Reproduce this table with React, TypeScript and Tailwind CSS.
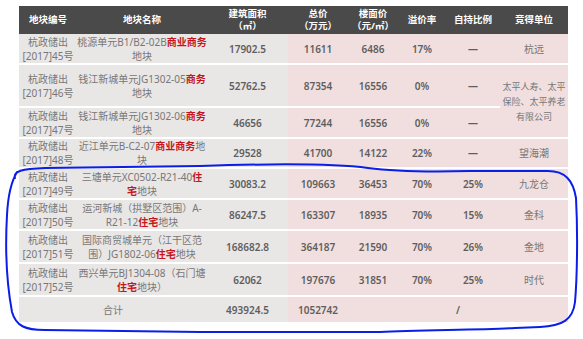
import type { ReactNode } from "react";

type Row = {
  code: string;
  name: ReactNode;
  area: string;
  total: string;
  unit: string;
  premium: string;
  hold: string;
  winner?: ReactNode;
  winnerSpan?: number;
  h: string;
};

function Red({ children }: { children: ReactNode }) {
  return <span className="font-bold text-[#c4161c]">{children}</span>;
}

const rows: Row[] = [
  {
    code: "45",
    name: (
      <>
        桃源单元B1/B2-02B<Red>商业商务</Red>
        <br />
        地块
      </>
    ),
    area: "17902.5",
    total: "11611",
    unit: "6486",
    premium: "17%",
    hold: "—",
    winner: "杭远",
    h: "h-[30px]",
  },
  {
    code: "46",
    name: (
      <>
        钱江新城单元JG1302-05<Red>商务</Red>
        <br />
        地块
      </>
    ),
    area: "52762.5",
    total: "87354",
    unit: "16556",
    premium: "0%",
    hold: "—",
    winner: (
      <span className="text-[9px] leading-[15px] whitespace-nowrap">
        太平人寿、太平
        <br />
        保险、太平养老
        <br />
        有限公司
      </span>
    ),
    winnerSpan: 2,
    h: "h-[43px]",
  },
  {
    code: "47",
    name: (
      <>
        钱江新城单元JG1302-06<Red>商务</Red>
        <br />
        地块
      </>
    ),
    area: "46656",
    total: "77244",
    unit: "16556",
    premium: "0%",
    hold: "—",
    h: "h-[31px]",
  },
  {
    code: "48",
    name: (
      <>
        近江单元B-C2-07<Red>商业商务</Red>地
        <br />块
      </>
    ),
    area: "29528",
    total: "41700",
    unit: "14122",
    premium: "22%",
    hold: "—",
    winner: "望海潮",
    h: "h-[30px]",
  },
  {
    code: "49",
    name: (
      <>
        三塘单元XC0502-R21-40<Red>住</Red>
        <br />
        <Red>宅</Red>地块
      </>
    ),
    area: "30083.2",
    total: "109663",
    unit: "36453",
    premium: "70%",
    hold: "25%",
    winner: "九龙仓",
    h: "h-[31px]",
  },
  {
    code: "50",
    name: (
      <>
        运河新城（拱墅区范围）A-
        <br />
        R21-12<Red>住宅</Red>地块
      </>
    ),
    area: "86247.5",
    total: "163307",
    unit: "18935",
    premium: "70%",
    hold: "15%",
    winner: "金科",
    h: "h-[31px]",
  },
  {
    code: "51",
    name: (
      <>
        国际商贸城单元（江干区范
        <br />
        围）JG1802-06<Red>住宅</Red>地块
      </>
    ),
    area: "168682.8",
    total: "364187",
    unit: "21590",
    premium: "70%",
    hold: "26%",
    winner: "金地",
    h: "h-[33px]",
  },
  {
    code: "52",
    name: (
      <>
        西兴单元BJ1304-08（石门塘
        <br />
        <Red>住宅</Red>地块）
      </>
    ),
    area: "62062",
    total: "197676",
    unit: "31851",
    premium: "70%",
    hold: "25%",
    winner: "时代",
    h: "h-[33px]",
  },
];

const gray = "bg-[#e9e6e6] border-b-2 border-white p-0 text-center align-middle";
const pink = "bg-[#f1dfdf] border-b-2 border-white p-0 text-center align-middle";
const num = "font-semibold text-[#5e5e5e]";

export default function App() {
  return (
    <div
      className="relative h-[339px] w-[583px] overflow-hidden bg-white pt-[6px] pl-[19px]"
      style={{ fontFamily: '"Noto Sans", "Noto Sans CJK SC", sans-serif' }}
    >
      <table className="w-[549px] table-fixed border-collapse text-[10px] leading-[14px] text-[#777]">
        <colgroup>
          <col className="w-[58px]" />
          <col className="w-[130px]" />
          <col className="w-[81px]" />
          <col className="w-[60px]" />
          <col className="w-[50px]" />
          <col className="w-[48px]" />
          <col className="w-[54px]" />
          <col className="w-[68px]" />
        </colgroup>
        <thead>
          <tr className="h-[28px] bg-[#4a4a4a] text-[9.5px] leading-[12px] font-bold text-white">
            <th className="p-0 font-bold">地块编号</th>
            <th className="p-0 font-bold">地块名称</th>
            <th className="p-0 font-bold">
              建筑面积
              <br />
              （㎡）
            </th>
            <th className="p-0 font-bold">
              总价
              <br />
              （万元）
            </th>
            <th className="p-0 font-bold">
              楼面价
              <br />
              （元/㎡）
            </th>
            <th className="p-0 font-bold">溢价率</th>
            <th className="p-0 font-bold">自持比例</th>
            <th className="p-0 font-bold">竞得单位</th>
          </tr>
        </thead>
        <tbody>
          {rows.map((r) => (
            <tr key={r.code} className={r.h}>
              <td className={gray}>
                杭政储出
                <br />
                [2017]{r.code}号
              </td>
              <td className={`${gray} whitespace-nowrap`}>{r.name}</td>
              <td className={`${gray} ${num}`}>{r.area}</td>
              <td className={`${pink} ${num}`}>{r.total}</td>
              <td className={`${pink} ${num}`}>{r.unit}</td>
              <td className={`${pink} ${num}`}>{r.premium}</td>
              <td className={`${pink} ${num}`}>{r.hold}</td>
              {r.winner !== undefined && (
                <td className={pink} rowSpan={r.winnerSpan ?? 1}>
                  {r.winner}
                </td>
              )}
            </tr>
          ))}
          <tr className="h-[26px]">
            <td className="bg-[#e9e6e6] p-0 text-center" colSpan={2}>
              合计
            </td>
            <td className={`bg-[#e9e6e6] p-0 text-center ${num}`}>493924.5</td>
            <td className={`bg-[#f1dfdf] p-0 text-center ${num}`}>1052742</td>
            <td className={`bg-[#f1dfdf] p-0 text-center ${num}`} colSpan={4}>
              /
            </td>
          </tr>
        </tbody>
      </table>

      <svg
        className="pointer-events-none absolute top-0 left-0"
        width="583"
        height="339"
        viewBox="0 0 583 339"
        fill="none"
      >
        <path
          d="M15 178 C13 171 22 169 45 168 L200 166 C260 164 330 163 368 168 C398 172 430 172 470 171 L548 171 C565 171 573 180 576 198 C578 235 577 280 575 302 C573 320 562 326 540 327 L515 328 C480 330 420 330 380 332 L200 332 L45 330 C25 330 16 326 12 312 C7 285 5 250 7 215 C8 195 11 182 17 172"
          stroke="#0a1ee8"
          strokeWidth="2"
          strokeLinecap="round"
          strokeLinejoin="round"
        />
      </svg>
    </div>
  );
}
